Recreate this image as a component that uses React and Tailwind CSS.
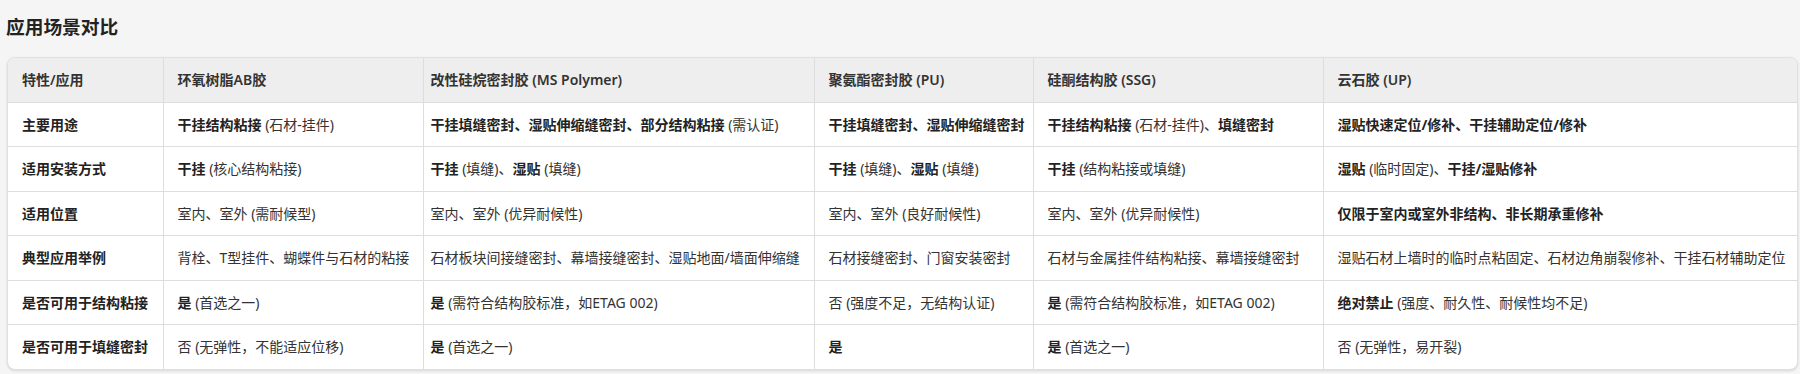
const B = ({ children }) => <strong className="font-bold text-[#222]">{children}</strong>;

const headers = [
  '特性/应用',
  '环氧树脂AB胶',
  '改性硅烷密封胶 (MS Polymer)',
  '聚氨酯密封胶 (PU)',
  '硅酮结构胶 (SSG)',
  '云石胶 (UP)',
];

const rows = [
  {
    label: '主要用途',
    cells: [
      <><B>干挂结构粘接</B> (石材-挂件)</>,
      <><B>干挂填缝密封、湿贴伸缩缝密封、部分结构粘接</B> (需认证)</>,
      <><B>干挂填缝密封、湿贴伸缩缝密封</B></>,
      <><B>干挂结构粘接</B> (石材-挂件)、<B>填缝密封</B></>,
      <><B>湿贴快速定位/修补、干挂辅助定位/修补</B></>,
    ],
  },
  {
    label: '适用安装方式',
    cells: [
      <><B>干挂</B> (核心结构粘接)</>,
      <><B>干挂</B> (填缝)、<B>湿贴</B> (填缝)</>,
      <><B>干挂</B> (填缝)、<B>湿贴</B> (填缝)</>,
      <><B>干挂</B> (结构粘接或填缝)</>,
      <><B>湿贴</B> (临时固定)、<B>干挂/湿贴修补</B></>,
    ],
  },
  {
    label: '适用位置',
    cells: [
      '室内、室外 (需耐候型)',
      '室内、室外 (优异耐候性)',
      '室内、室外 (良好耐候性)',
      '室内、室外 (优异耐候性)',
      <><B>仅限于室内或室外非结构、非长期承重修补</B></>,
    ],
  },
  {
    label: '典型应用举例',
    cells: [
      '背栓、T型挂件、蝴蝶件与石材的粘接',
      '石材板块间接缝密封、幕墙接缝密封、湿贴地面/墙面伸缩缝',
      '石材接缝密封、门窗安装密封',
      '石材与金属挂件结构粘接、幕墙接缝密封',
      '湿贴石材上墙时的临时点粘固定、石材边角崩裂修补、干挂石材辅助定位',
    ],
  },
  {
    label: '是否可用于结构粘接',
    cells: [
      <><B>是</B> (首选之一)</>,
      <><B>是</B> (需符合结构胶标准，如ETAG 002)</>,
      '否 (强度不足，无结构认证)',
      <><B>是</B> (需符合结构胶标准，如ETAG 002)</>,
      <><B>绝对禁止</B> (强度、耐久性、耐候性均不足)</>,
    ],
  },
  {
    label: '是否可用于填缝密封',
    cells: [
      '否 (无弹性，不能适应位移)',
      <><B>是</B> (首选之一)</>,
      <><B>是</B></>,
      <><B>是</B> (首选之一)</>,
      '否 (无弹性，易开裂)',
    ],
  },
];

// column 3 sits tighter to its left border in the reference
const padX = ['pl-[14px]', 'pl-[14px]', 'pl-[7px]', 'pl-[14px]', 'pl-[14px]', 'pl-[14px]'];

export default function App() {
  return (
    <div
      className="min-h-[374px] bg-[#f5f5f5] pl-[7px] pr-[2px] pt-[13px] text-[#333]"
      style={{ fontFamily: '"Noto Sans", "Noto Sans CJK SC", sans-serif' }}
    >
      <h3 className="-ml-px mb-4 text-[18.72px] font-bold leading-7 text-[#222]">应用场景对比</h3>

      <div className="overflow-hidden rounded-lg border border-[#e0e0e0] bg-white shadow-sm">
        <table className="w-full table-fixed border-collapse text-left text-[14px] leading-[19.5px]">
          <colgroup>
            <col className="w-[155px]" />
            <col className="w-[260px]" />
            <col className="w-[391px]" />
            <col className="w-[219px]" />
            <col className="w-[290px]" />
            <col />
          </colgroup>
          <thead>
            <tr className="bg-[#eeeeee]">
              {headers.map((h, i) => (
                <th
                  key={h}
                  className={`whitespace-nowrap border-b border-[#dddddd] py-3 pr-2 font-semibold text-[#333] ${padX[i]} ${i < 5 ? 'border-r' : ''}`}
                >
                  {h}
                </th>
              ))}
            </tr>
          </thead>
          <tbody>
            {rows.map((r, ri) => (
              <tr key={r.label}>
                <td
                  className={`whitespace-nowrap border-r border-[#dddddd] py-3 pl-[14px] pr-2 font-bold text-[#222] ${ri < rows.length - 1 ? 'border-b' : ''}`}
                >
                  {r.label}
                </td>
                {r.cells.map((c, ci) => (
                  <td
                    key={ci}
                    className={`whitespace-nowrap border-[#dddddd] py-3 pr-2 ${padX[ci + 1]} ${ci < 4 ? 'border-r' : ''} ${ri < rows.length - 1 ? 'border-b' : ''}`}
                  >
                    {c}
                  </td>
                ))}
              </tr>
            ))}
          </tbody>
        </table>
      </div>
    </div>
  );
}
